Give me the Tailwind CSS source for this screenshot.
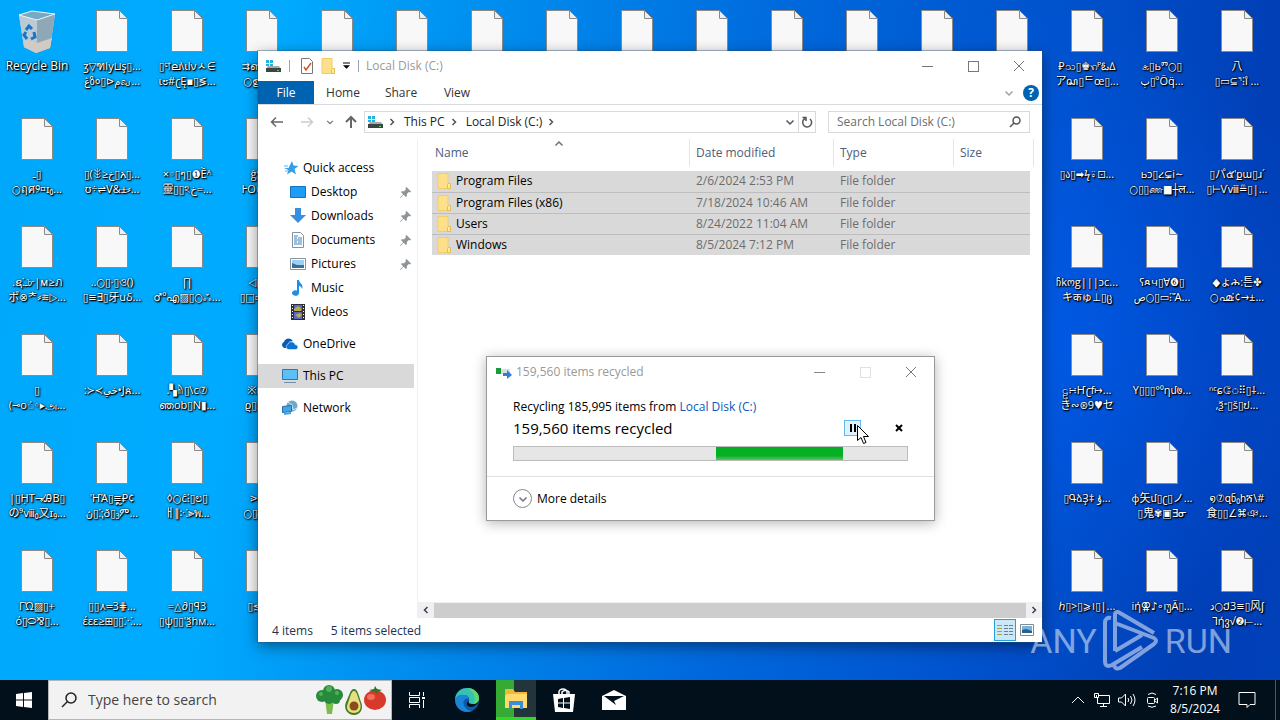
<!DOCTYPE html>
<html lang="en">
<head>
    <meta charset="UTF-8">
    <meta name="viewport" content="width=device-width, initial-scale=1.0">
    <title>Desktop</title>

    <!-- Tailwind CSS -->
    <script src="https://cdn.jsdelivr.net/npm/@tailwindcss/browser@4"></script>
</head>

<body class="h-screen flex flex-col overflow-hidden text-xs text-black font-['Open_Sans','Noto_Sans','DejaVu_Sans_Condensed','DejaVu_Sans','Noto_Sans_CJK_JP',sans-serif]">

    <!-- Shared icons -->
    <svg class="hidden">
        <symbol id="drive" viewBox="0 0 16 16">
            <path d="M1 2h3v3H1zM5 2h3v3H5zM1 6h3v2H1zM5 6h3v2H5z" fill="#1fb5e0"/>
            <path d="M3 8h11l2 3H1z" fill="#a5abab"/>
            <path d="M1 10h15v4H1z" fill="#3c4444"/>
            <path d="M12 12h2v1h-2z" fill="#5ad75a"/>
        </symbol>
        <symbol id="folder" viewBox="0 0 14 16">
            <path d="M1 .500h10v10h2v5H1z" fill="#ffe08a" stroke="#f0cd68"/>
            <path d="M10.500 15.500v-4l1-1h2v5z" fill="#ffe9a6" stroke="#e6bd4f"/>
        </symbol>
        <symbol id="pin" viewBox="0 0 12 12">
            <path d="M7 0l5 5-1 1-1.500-.5L7.500 7.500 7.500 10l-1 1-2.500-2.500L.5 12 0 11.500 3.500 8 1 5.500l1-1h2.500l2-2L6 1z" fill="#8d9499"/>
        </symbol>
        <symbol id="chevron" viewBox="0 0 10 10">
            <path d="M1.500 3.500L5 7l3.500-3.500" fill="none" stroke="currentColor" stroke-width="1.500"/>
        </symbol>
        <symbol id="next" viewBox="0 0 10 10">
            <path d="M3.500 2l3 3-3 3" fill="none" stroke="currentColor" stroke-width="1.500"/>
        </symbol>
        <symbol id="close" viewBox="0 0 12 12">
            <path d="M1 1l10 10M11 1L1 11" fill="none" stroke="currentColor"/>
        </symbol>
        <symbol id="file" viewBox="0 0 32 42">
            <path d="M.5.5h23l8 8v33H.5z" fill="#f8f8f8" stroke="#8d8a86"/>
            <path d="M23.500.5v8h8z" fill="#e6effa" stroke="#8d8a86"/>
        </symbol>
    </svg>

    <main class="relative flex-1 overflow-hidden bg-[radial-gradient(ellipse_420px_480px_at_82%_50%,rgba(0,100,255,0.5),transparent_70%),linear-gradient(98deg,#00a8fb_0%,#00abff_20%,#0091f0_34%,#0068dc_58%,#0051cc_78%,#003fb6_93%,#0040b8_100%)]">

        <div id="desktop" class="grid grid-flow-col grid-rows-[repeat(6,108px)] auto-cols-[75px]"></div>

        <!-- Explorer window -->
        <section class="absolute left-[258px] top-[51px] w-[784px] h-[591px] flex flex-col bg-white shadow-[0_0_0_1px_rgba(40,80,120,0.4),0_4px_14px_rgba(0,0,0,0.45)]">
            <header class="h-[30px] shrink-0 flex items-center pl-[7px]">
                <svg class="size-4"><use href="#drive"/></svg>
                <span class="w-px h-3 ml-2 bg-gray-400"></span>
                <svg class="w-3 h-4 ml-[11px]" viewBox="0 0 12 16"><path d="M.5.5h8l3 3v12H.5z" fill="#fff" stroke="#777"/><path d="M3 9l2 3 5-7" fill="none" stroke="#d0522b" stroke-width="1.500"/></svg>
                <svg class="w-[14px] h-4 ml-2"><use href="#folder"/></svg>
                <svg class="w-[7px] h-2 ml-2" viewBox="0 0 8 8"><path d="M0 0h8v1H0zM0 3h8L4 7z"/></svg>
                <span class="w-px h-3 ml-2 bg-gray-400"></span>
                <h1 class="ml-[7px] text-[#999]">Local Disk (C:)</h1>
                <div class="ml-auto flex text-[#777]">
                    <button class="w-[46px] h-[30px] flex items-center justify-center" aria-label="Minimize"><span class="w-[11px] h-px bg-[#777]"></span></button>
                    <button class="w-[46px] h-[30px] flex items-center justify-center" aria-label="Maximize"><span class="size-[11px] border border-[#777]"></span></button>
                    <button class="w-[46px] h-[30px] flex items-center justify-center" aria-label="Close"><svg class="size-3"><use href="#close"/></svg></button>
                </div>
            </header>

            <nav class="h-[24px] shrink-0 flex items-center border-b border-[#dadbdc] text-[#333]">
                <button class="w-14 h-[23px] bg-[#0063b1] text-white">File</button>
                <button class="w-[58px]">Home</button>
                <button class="w-[58px]">Share</button>
                <button class="w-[54px]">View</button>
                <button class="ml-auto text-gray-400" aria-label="Expand ribbon"><svg class="size-[10px]"><use href="#chevron"/></svg></button>
                <button class="size-4 ml-[9px] mr-[3px] rounded-full bg-[#0063b1] text-white font-bold leading-4" aria-label="Help">?</button>
            </nav>

            <div class="h-[34px] shrink-0 flex items-center pr-3">
                <button class="ml-3" aria-label="Back"><svg class="size-[14px]" viewBox="0 0 14 14" fill="none" stroke="#666" stroke-width="1.500"><path d="M13 7H2M6 2.500L1.500 7 6 11.500"/></svg></button>
                <button class="ml-4" aria-label="Forward"><svg class="size-[14px]" viewBox="0 0 14 14" fill="none" stroke="#ccc" stroke-width="1.500"><path d="M1 7h11M8 2.500L12.500 7 8 11.500"/></svg></button>
                <button class="ml-3 text-gray-500" aria-label="Recent"><svg class="size-2"><use href="#chevron"/></svg></button>
                <button class="ml-[10px] mr-[6px]" aria-label="Up"><svg class="size-[14px]" viewBox="0 0 14 14" fill="none" stroke="#666" stroke-width="2"><path d="M7 13V2M2 7l5-5 5 5"/></svg></button>
                <div class="flex-1 h-[22px] flex items-center border border-[#d9d9d9] text-[#222]">
                    <svg class="size-4 ml-[2px]"><use href="#drive"/></svg>
                    <svg class="size-[10px] ml-1 text-gray-600"><use href="#next"/></svg>
                    <a href="#" class="ml-[7px]">This PC</a>
                    <svg class="size-[10px] ml-1 text-gray-600"><use href="#next"/></svg>
                    <a href="#" class="ml-[7px]">Local Disk (C:)</a>
                    <svg class="size-[10px] ml-1 text-gray-600"><use href="#next"/></svg>
                    <button class="ml-auto mr-[3px] text-gray-600" aria-label="Previous locations"><svg class="size-[10px]"><use href="#chevron"/></svg></button>
                    <button class="w-[17px] h-5 flex items-center justify-center border-l border-[#d9d9d9]" aria-label="Refresh"><svg class="size-3" viewBox="0 0 12 12" fill="none" stroke="#555" stroke-width="1.500"><path d="M9 3a4.500 4.500 0 1 1-5-.5M1.500 1.500H5V5"/></svg></button>
                </div>
                <label class="w-[202px] h-[22px] ml-3 px-2 flex items-center border border-[#d9d9d9]">
                    <input type="text" placeholder="Search Local Disk (C:)" aria-label="Search" class="flex-1 min-w-0 outline-none placeholder:text-[#6d6d6d]">
                    <svg class="size-3" viewBox="0 0 12 12" fill="none" stroke="#555" stroke-width="1.500"><circle cx="7.500" cy="4.500" r="3.500"/><path d="M5 7l-4 4"/></svg>
                </label>
            </div>

            <div class="flex-1 min-h-0 flex">
                <aside class="w-40 pt-[17px] border-r border-[#f0f0f0]">
                    <ul class="w-[156px]">
                        <li class="h-6 flex items-center pl-[25px] gap-1">
                            <svg class="size-4" viewBox="0 0 16 16"><path d="M9 1l1.500 4.500 5 .5-4 3 1.500 5.500-4.500-3-4.500 3L5.500 10 1 8h4.500z" fill="#2f9fe8"/><path d="M1 6h4M2 11h3" stroke="#5bb5ef"/></svg>
                            <a href="#">Quick access</a>
                        </li>
                        <li class="h-6 flex items-center pl-8 pr-[3px] gap-[5px]">
                            <svg class="size-4" viewBox="0 0 16 16"><path d="M.5 2.500h15v11H.5z" fill="#1e9bf5" stroke="#1273c4"/></svg>
                            <a href="#">Desktop</a><svg class="size-[11px] ml-auto"><use href="#pin"/></svg>
                        </li>
                        <li class="h-6 flex items-center pl-8 pr-[3px] gap-[5px]">
                            <svg class="size-4" viewBox="0 0 16 16"><path d="M5 0h6v7h5l-8 8-8-8h5z" fill="#3a8ede"/></svg>
                            <a href="#">Downloads</a><svg class="size-[11px] ml-auto"><use href="#pin"/></svg>
                        </li>
                        <li class="h-6 flex items-center pl-8 pr-[3px] gap-[5px]">
                            <svg class="size-4" viewBox="0 0 16 16"><path d="M2.500.5h8l3 3v12h-11z" fill="#fff" stroke="#8a9299"/><path d="M4 4h4M4 6h3M8 6h4M4 8h8M4 10h3M8 10h4M4 12h8" stroke="#3584c4"/></svg>
                            <a href="#">Documents</a><svg class="size-[11px] ml-auto"><use href="#pin"/></svg>
                        </li>
                        <li class="h-6 flex items-center pl-8 pr-[3px] gap-[5px]">
                            <svg class="size-4" viewBox="0 0 16 16"><path d="M.5 2.500h15v11H.5z" fill="#fff" stroke="#8a9299"/><path d="M2 4h12v8H2z" fill="#9bd0f5"/><path d="M2 7l5 2 7 0v3H2z" fill="#3d6f8f"/></svg>
                            <a href="#">Pictures</a><svg class="size-[11px] ml-auto"><use href="#pin"/></svg>
                        </li>
                        <li class="h-6 flex items-center pl-8 gap-[5px]">
                            <svg class="size-4" viewBox="0 0 16 16"><path d="M7 0h2c0 3 5 4 3 9-.5-2-1.500-3-3-3v7a3.500 2.800 0 1 1-2-2.500z" fill="#1e8fe6"/></svg>
                            <a href="#">Music</a>
                        </li>
                        <li class="h-6 flex items-center pl-8 gap-[5px]">
                            <svg class="size-4" viewBox="0 0 16 16"><path d="M1 0h14v16H1z" fill="#2f2f33"/><path d="M4 1h8v6H4z" fill="#5a66c8"/><path d="M4 8h8v7H4z" fill="#5a66c8"/><path d="M4 5l4-3 3 2v3H4zM5 11l5-2 2 2-3 3z" fill="#b9ac45"/><path d="M2.500 1v15M13.500 1v15" stroke="#fff" stroke-dasharray="1 2"/></svg>
                            <a href="#">Videos</a>
                        </li>
                        <li class="h-6 mt-2 flex items-center pl-6 gap-[5px]">
                            <svg class="size-4" viewBox="0 0 16 16"><path d="M1 11a3 3 0 0 1 1-5c1-4 6-5 9-1L7 6 5 12H2z" fill="#0a5cb0"/><path d="M6 13.500a3 3 0 0 1 0-5.500c1-3 6-3 7 .5 4 .5 3.500 5 .5 5z" fill="#0f74cf" stroke="#fff" stroke-width=".5"/></svg>
                            <a href="#">OneDrive</a>
                        </li>
                        <li class="h-6 mt-2 flex items-center pl-6 gap-[5px] bg-[#d9d9d9]">
                            <svg class="size-4" viewBox="0 0 16 16"><path d="M.5 1.500h15v10H.5z" fill="#5cc0f7" stroke="#2a78b5"/><path d="M2 14.500h12" stroke="#6f8fa8"/></svg>
                            <a href="#">This PC</a>
                        </li>
                        <li class="h-6 mt-2 flex items-center pl-6 gap-[5px]">
                            <svg class="size-4" viewBox="0 0 16 16"><circle cx="10" cy="6" r="5.500" fill="#6fa9c9"/><path d="M6 2l4 3 1 5 4-2" fill="none" stroke="#cfe6f2"/><path d="M.5 6.500l9-1v6l-9 1z" fill="#43a5e6" stroke="#236fa8"/><path d="M2 14l7-1" stroke="#43a5e6" stroke-width="2"/></svg>
                            <a href="#">Network</a>
                        </li>
                    </ul>
                </aside>

                <div class="flex-1 min-w-0 flex flex-col">
                    <div class="relative flex-1 pl-[14px] pr-3">
                        <svg class="absolute left-[136px] top-0 size-[10px] rotate-180 text-gray-500"><use href="#chevron"/></svg>
                        <table class="w-full table-fixed text-left text-[#6d6d6d]">
                            <thead class="text-[#4c607a]">
                                <tr class="h-8 align-top">
                                    <th class="w-[258px] p-0 font-normal"><div class="h-[27px] leading-[27px] pl-[3px] border-r border-[#e5e5e5]">Name</div></th>
                                    <th class="w-36 p-0 font-normal"><div class="h-[27px] leading-[27px] pl-[6px] border-r border-[#e5e5e5]">Date modified</div></th>
                                    <th class="w-[120px] p-0 font-normal"><div class="h-[27px] leading-[27px] pl-[6px] border-r border-[#e5e5e5]">Type</div></th>
                                    <th class="p-0 font-normal"><div class="w-20 h-[27px] leading-[27px] pl-[6px] border-r border-[#e5e5e5]">Size</div></th>
                                </tr>
                            </thead>
                            <tbody id="files"></tbody>
                        </table>
                    </div>
                    <div class="h-4 flex items-center justify-between text-gray-700 bg-[#f0f0f0]">
                        <svg class="w-4 h-[10px] rotate-180"><use href="#next" x="3" width="10" height="10"/></svg>
                        <span class="flex-1 h-[15px] bg-[#cdcdcd]"></span>
                        <svg class="w-4 h-[10px]"><use href="#next" x="3" width="10" height="10"/></svg>
                    </div>
                </div>
            </div>

            <footer class="h-[24px] shrink-0 flex items-center pl-[14px] pr-1 text-[#1e3250]">
                <span class="leading-5 pt-[2px]">4 items</span>
                <span class="leading-5 pt-[2px] ml-[18px]">5 items selected</span>
                <button class="w-[22px] h-[22px] ml-auto flex items-center justify-center border border-[#26a0da] bg-[#cbe8f6]" aria-label="Details">
                    <svg class="w-4 h-3" viewBox="0 0 16 12"><path d="M0 1.500h5M0 4.500h5M0 7.500h5M0 10.500h5" stroke="#b39a52"/><path d="M7 1.500h9M7 4.500h9M7 7.500h9M7 10.500h9" stroke="#6b7f93" stroke-dasharray="4 1"/></svg>
                </button>
                <button class="w-[22px] h-[22px] flex items-center justify-center" aria-label="Large icons">
                    <svg class="w-[14px] h-3" viewBox="0 0 14 12"><path d="M.5.5h13v11H.5z" fill="#fff" stroke="#888"/><path d="M2 2h10v7H2z" fill="#6fb4e8"/><path d="M2 6l4-1 6 2v2H2z" fill="#2c5f88"/></svg>
                </button>
            </footer>
        </section>

        <!-- Watermark -->
        <div class="absolute right-12 bottom-2 flex items-center gap-[6px] text-[34px] leading-[60px] text-white/50 font-['Liberation_Sans_Narrow','Roboto',sans-serif]">
            <span>ANY</span>
            <svg class="w-14 h-[62px]" viewBox="0 0 56 62" fill="none" stroke="currentColor" stroke-width="4" stroke-linejoin="round">
                <path d="M8 8q-6-1-6 5v38q0 7 7 4l30-18M12 41V5q0-5 5-2l34 20M12 41l27-16M12 13l39 15q4 3 0 6L17 58q-5 2-6-3M12 16v25"/>
            </svg>
            <span>RUN</span>
        </div>

        <!-- Recycle dialog -->
        <section class="absolute left-[486px] top-[356px] w-[449px] h-[165px] flex flex-col bg-white border border-[#9a9a9a] shadow-[0_2px_12px_rgba(0,0,0,0.3)]">
            <header class="h-[30px] flex items-center pl-[9px] text-[#999]">
                <svg class="size-4" viewBox="0 0 16 16"><path d="M4 5h10v5H4z" fill="#d8e0e4"/><path d="M0 4h5v6H0z" fill="#1d9a3b"/><path d="M7 9h4V6l5 5-5 4v-3H7z" fill="#2f7fd6"/></svg>
                <h2 class="ml-1">159,560 items recycled</h2>
                <div class="ml-auto flex">
                    <button class="w-[46px] h-7 flex items-center justify-center" aria-label="Minimize"><span class="w-[11px] h-px bg-[#888]"></span></button>
                    <button class="w-[46px] h-7 flex items-center justify-center" aria-label="Maximize" disabled><span class="size-[11px] border border-[#e0e0e0]"></span></button>
                    <button class="w-[46px] h-7 flex items-center justify-center text-[#777]" aria-label="Close"><svg class="size-3"><use href="#close"/></svg></button>
                </div>
            </header>
            <div class="flex-1 pl-[26px] pr-[26px] pt-3">
                <p class="leading-4">Recycling 185,995 items from <a href="#" class="text-[#0a5ab8]">Local Disk (C:)</a></p>
                <div class="h-[25px] flex items-end">
                    <p class="text-[15px] leading-6">159,560 items recycled</p>
                    <button class="relative w-[17px] h-4 mb-1 ml-auto flex items-center justify-center gap-[2px] border border-[#66b7ee] bg-[#e0f1fc]" aria-label="Pause">
                        <span class="w-[2px] h-2 bg-black"></span><span class="w-[2px] h-2 bg-black"></span>
                        <svg class="absolute left-3 top-1 w-3 h-5" viewBox="0 0 12 20"><path d="M.5.5v15l3.500-3 2.500 6 2.500-1-2.500-6h5z" fill="#fff" stroke="#000"/></svg>
                    </button>
                    <button class="w-[18px] h-4 mb-1 ml-[29px] flex items-center justify-center" aria-label="Cancel"><svg class="size-2" viewBox="0 0 8 8"><path d="M1 1l6 6M7 1L1 7" stroke="#000" stroke-width="2"/></svg></button>
                </div>
                <div class="h-[15px] mt-[6px] flex border border-[#bcbcbc] bg-[#e6e6e6]" role="progressbar" aria-label="Recycling">
                    <span class="w-[127px] ml-[202px] bg-gradient-to-b from-[#06b025] from-70% to-[#4fc765]"></span>
                </div>
            </div>
            <footer class="h-11 border-t border-[#dfdfdf] flex items-center pl-[26px]">
                <button class="flex items-center gap-[5px]">
                    <span class="size-[19px] flex items-center justify-center border border-[#888] rounded-full text-gray-500"><svg class="size-[10px]"><use href="#chevron"/></svg></span>
                    More details
                </button>
            </footer>
        </section>
    </main>

    <!-- Taskbar -->
    <footer class="h-10 shrink-0 flex items-center bg-[#02101b] text-white">
        <button class="w-12 h-10 flex items-center justify-center" aria-label="Start"><svg class="size-4" viewBox="0 0 16 16" fill="#fff"><path d="M0 2l7-1v6.500H0zM8 1l8-1v7.500H8zM0 8.500h7V15l-7-1zM8 8.500h8V16l-8-1z"/></svg></button>
        <label class="w-[344px] h-10 flex items-center pl-3 pr-1 bg-[#f2f2f2] border border-[#b5b5b5] text-[#333]">
            <svg class="size-4" viewBox="0 0 16 16" fill="none" stroke="#222" stroke-width="1.500"><circle cx="10" cy="6" r="5"/><path d="M6.500 9.500L1 15"/></svg>
            <input type="text" placeholder="Type here to search" aria-label="Search" class="flex-1 min-w-0 ml-[11px] text-[14px] outline-none placeholder:text-[#444]">
            <svg class="w-[72px] h-8" viewBox="0 0 72 32">
                <path d="M10 15h9l-2 15h-5z" fill="#7dbb4b"/>
                <g fill="#278a3c"><circle cx="7" cy="12" r="6"/><circle cx="14" cy="7" r="6"/><circle cx="22" cy="11" r="6"/><circle cx="14" cy="15" r="5"/><circle cx="21" cy="16" r="4"/></g>
                <g fill="#4eb453"><circle cx="6" cy="10" r="2"/><circle cx="14" cy="5" r="3"/><circle cx="22" cy="9" r="2"/></g>
                <path d="M39 5c4 0 5 8 7 13 3 7-1 13-7 13s-11-6-8-13c3-5 4-13 8-13z" fill="#417d25"/>
                <path d="M39 7c3 0 4 7 6 12 2 6-1 10-6 10s-9-4-6-10c2-5 3-12 6-12z" fill="#e6e080"/>
                <circle cx="39" cy="22" r="4.500" fill="#8d4a20"/>
                <ellipse cx="60" cy="16" rx="11" ry="10" fill="#d73a2a"/>
                <ellipse cx="56" cy="13" rx="4" ry="3" fill="#f0705c"/>
                <path d="M60 8l-6-2 5-1 1-3 2 3 5 1-5 2 1 3z" fill="#35702d"/>
            </svg>
        </label>
        <button class="w-[50px] h-10 flex items-center justify-center" aria-label="Task View"><svg class="size-4" viewBox="0 0 16 16" fill="none" stroke="#fff"><path d="M0 1.500V.5M.5 0v3.500h10V0M.5 16v-3.500h10V16M.5 5.500h10v5H.5zM14.500 0v4M14.500 8v8"/><path d="M13 5h3v2h-3z" fill="#fff" stroke="none"/></svg></button>
        <button class="w-[50px] h-10 flex items-center justify-center" aria-label="Edge">
            <svg class="size-6" viewBox="0 0 24 24">
                <circle cx="12" cy="12" r="12" fill="#0c59a4"/>
                <path d="M0 11C1 3 7 0 12 0c7 0 12 5 12 10 0 4-3 6-7 6-3 0-4-1-3-3 1-3-1-6-5-6-5 0-8 3-9 4z" fill="#35c1b4"/>
                <path d="M0 11c2-4 6-5 9-4 3 0 5 2 5 4-4-2-8 3-4 8 2 3 5 4 7 4-8 3-17-2-17-12z" fill="#1b86d8"/>
                <path d="M14 13c-1 2 0 3 3 3 3 0 6-1 7-4-1 4-4 7-8 7-4 0-6-4-2-6z" fill="#02101b"/>
                <path d="M12 0c7 0 12 5 12 10 0 4-3 6-6 6 4-5 1-13-6-16z" fill="#62d66a"/>
            </svg>
        </button>
        <button class="w-10 h-10 ml-1 flex items-center justify-center border-b-3 border-[#35d52c] bg-linear-to-r from-[#35ab35] from-45% to-[#24343b] to-45%" aria-label="File Explorer">
            <svg class="w-[22px] h-5" viewBox="0 0 22 20"><path d="M0 0h8l2 3h12v16H0z" fill="#f0b93a"/><path d="M2 5h20v14H0V7z" fill="#ffdb6e"/><path d="M4 20v-8h14v8h-3v-4H7v4z" fill="#3a8ed8"/></svg>
        </button>
        <button class="w-14 h-10 flex items-center justify-center" aria-label="Store"><svg class="w-[22px] h-6" viewBox="0 0 22 24"><path d="M6 8V4a4 3 0 0 1 8 0v4M9 6V4a4 3 0 0 1 7 0v4" fill="none" stroke="#fff" stroke-width="1.500"/><path d="M0 6h22l-2 18H2z" fill="#fff"/><path d="M5 11l5-1v4.500H5zM11 10l6-1v5.500h-6zM5 15.500h5V20l-5-1zM11 15.500h6V21l-6-1z" fill="#02101b"/></svg></button>
        <button class="w-11 h-10 flex items-center justify-center" aria-label="Mail"><svg class="w-6 h-5" viewBox="0 0 24 20"><path d="M0 6l12-6 12 6v14H0z" fill="#fff"/><path d="M2 6h20l-10 5 2 4z" fill="#02101b"/></svg></button>

        <div class="ml-auto flex items-center gap-2">
            <svg class="w-4 h-4" viewBox="0 0 16 16" fill="none" stroke="#fff"><path d="M2 11l6-6 6 6"/></svg>
            <svg class="w-4 h-4" viewBox="0 0 16 16" fill="none" stroke="#fff"><path d="M5 3.500h10.500v8H3.500V6M6 14.500h7M9.500 12v2M.5 1.500h4v4h-4zM2.500 3v2"/></svg>
            <svg class="w-[18px] h-4" viewBox="0 0 18 16" fill="none" stroke="#fff"><path d="M.5 6h3l4-4v12l-4-4h-3zM10 6q1.500 2 0 4M12.500 4q3 4 0 8M15 2q4 6 0 12"/></svg>
            <svg class="w-4 h-4" viewBox="0 0 16 16" fill="none" stroke="#fff"><rect x="3.500" y="5.500" width="7" height="6" rx="1"/><path d="M11 8l2.500-2v5L11 9M4 2.500q4-3 8 0M4 14q4 2.500 8 0"/></svg>
            <div class="w-[54px] text-center leading-[18px]"><p>7:16 PM</p><p>8/5/2024</p></div>
            <svg class="w-[18px] h-[18px] ml-2" viewBox="0 0 18 18" fill="none" stroke="#fff"><path d="M1 1.500h16v12h-5l-3 3v-3H1z"/></svg>
            <span class="w-px h-10 ml-[11px] mr-1 bg-gray-600"></span>
        </div>
    </footer>

    <script>
        const files = [
            ["Program Files", "2/6/2024 2:53 PM"],
            ["Program Files (x86)", "7/18/2024 10:46 AM"],
            ["Users", "8/24/2022 11:04 AM"],
            ["Windows", "8/5/2024 7:12 PM"],
        ];

        document.getElementById("files").innerHTML = files.map(([name, date]) => `
            <tr class="h-[21px] bg-[#d9d9d9] border-b border-[#bdbdbd] last:border-0">
                <td class="p-0 leading-5 text-black"><div class="flex items-center gap-[5px] pl-[5px]"><svg class="w-[14px] h-4"><use href="#folder"/></svg>${name}</div></td>
                <td class="p-0 pl-[6px] leading-5">${date}</td>
                <td class="p-0 pl-[6px] leading-5">File folder</td>
                <td class="p-0"></td>
            </tr>`).join("");

        // Labels by column, six rows each; columns behind the window stay unlabelled
        const labels = {
            0: [["Recycle Bin"], ["ـ▯", "○ฤศ୨¤ɪ₀..."], [".ຊ⁚ـ৮|ᴍ≥ภ", "ポ⊗ᅔ⸗≋▷..."], ["▯", "(⊸oံ◦▸அ..."], ["|▯ḤT⇁⁄ᎯB▯", "の⁹ⅷ₀又ɪ₉..."], ["ΓΏ▨▯+", "ό▯⬭⅋▯..."]],
            1: [["ʒ▽ฑly⊔ş▯...", "ڠზ०▯⊳مவ..."], ["▯(ꎺ≥خ▯አ▯...", "ʊ÷⇌ⴸ&±⸗..."], ["..○▯·▯ও()", "▯≡∃▯牙uδ..."], [":≻≺يخ•Jጰ..."], ["'ҤΆ▯≡ຼ₽¢", "ڽ▯⁚⁏ð▯₃ም..."], ["▯▯⋏═3⋕...", "έεε≥⊞▯▯⁙..."]],
            2: [["▯ণല\\ɩlνㅅ∈", "ɩ೮#ʗĘ▪▯≶..."], ["×◦▯ๆ▯❶Ềᴬ", "靈▯▯ঽخ=..."], ["∏", "♂ºഎ▨▯○ஃ..."], [".▚ᚥ▯\\c⑦", "ഞοb▯N▮..."], ["◊○ĉ⁝▯ಲ▯", "ㅐ∥∶⁖⫸พ..."], ["=△∂▯ꟼ3", "▯ψ▯▯'ѯhм..."]],
            3: [["⇉ബ▯◦...", "○ഉ*▯..."], ["ĝŠ▯▯", "ⱵO∪▯▯..."], ["◁▯⊗▯", "▯□▭¬▯..."], ["※⊠2▯", "ϱ▯:赤..."], ["⋗∷▯▯", "○▯ஓ▯..."], ["▯≲ॐ▯"]],
            14: [["₽သ▯♚ꩫᴾఓ∆", "アꦱ▯ᄃœ▯..."], ["▯ა▯➡ϟ⍤⊡..."], ["ჩkოg|||ɔc...", "キकゅ⊥▯ც"], ["ဠ∺Ҥʗf↦...", "き∾⊛9♥セ"], ["▯ԳձҘ‡ ۇ..."], ["ℎ▯>▯⩾।▯|..."]],
            15: [["க▯ьⱅ○▯", "ٻ▯ºŌq̈..."], ["ьɔ▯ረ⊊i∼", "○▯▯ண■┼ल..."], ["ʕጻч▯∀❻▯", "ص○▯▭⁝Ἄ..."], ["Y▯▯▯°⁰ηմ७..."], ["ф矢մ▯ʗ▯ノ...", "▯鬼✾▣∃ᓂ"], ["i̇ή⚢♪∘ıუÃ▯..."]],
            16: [["八", "▯▭⊆ᕐ⁝i̊ ..."], ["▯パ๕'քա▯ɹ՛", "▯⊢Ѵⅷ≞▯|..."], ["◆ょሕ:튼✤", "○൶⁝¢→±..."], ["ⁿᶜɕே⠿▯⸸...", "‚ѯ⁼▯š▯ປ..."], ["໑⑦զნ₀հሻ\\#", "食▯▯∠⌘ঞ..."], ["د○Ქ3≡▯风ʃ", "⅂ήვ√❷⟝..."]],
        };

        const bin = `<svg class="w-10 h-[44px]" viewBox="0 0 40 44"><path d="M2 5l13-4 23 3-5 34-14 5-12-6z" fill="#c9dbe5"/><path d="M2 5l18 5v33L7 37z" fill="#bccad3"/><path d="M20 10l18-6-5 34-13 5z" fill="#8fa8b8"/><path d="M2 5l13-4 23 3-18 6z" fill="#78a9c4" stroke="#e9f4fa"/><path d="M7 29l13 4 15-5-2 10-14 5-12-6z" fill="#d2cbc5"/><path d="M9 20l3-4 3 3M17 22l1 5-4 2M10 29l-3-4 2-3" fill="none" stroke="#1677c9" stroke-width="3"/></svg>`;
        const doc = `<svg class="w-8 h-[42px]"><use href="#file"/></svg>`;

        let html = "";
        for (let col = 0; col < 17; col++) {
            for (let row = 0; row < 6; row++) {
                const text = labels[col] ? labels[col][row] : [];
                const isBin = col === 0 && row === 0;
                html += `
                    <div class="flex flex-col items-center pt-[10px] pr-px">
                        ${isBin ? bin : doc}
                        <div class="${isBin ? "mt-1 text-xs" : "mt-[6px] text-[11px]"} flex flex-col items-center text-white leading-[15px] whitespace-nowrap [text-shadow:1px_1px_2px_#000,0_0_2px_#000,1px_1px_1px_#000]">
                            ${text.map(line => `<span class="h-[15px] [unicode-bidi:bidi-override]">${line}</span>`).join("")}
                        </div>
                    </div>`;
            }
        }
        document.getElementById("desktop").innerHTML = html;
    </script>
</body>
</html>
